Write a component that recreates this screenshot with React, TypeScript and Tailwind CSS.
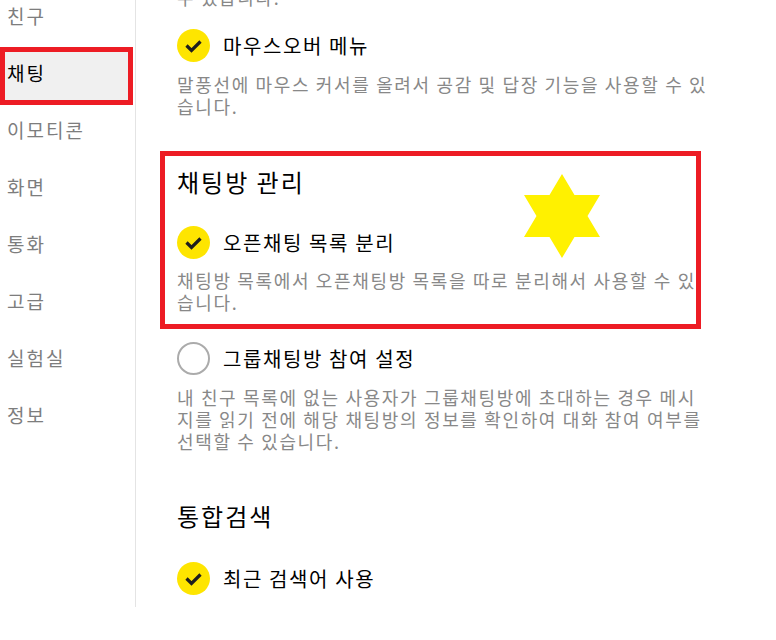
const menu = ["친구", "채팅", "이모티콘", "화면", "통화", "고급", "실험실", "정보"];

function CheckOn() {
  return (
    <svg width="33" height="33" viewBox="0 0 33 33" className="shrink-0">
      <circle cx="16.5" cy="16.5" r="16.5" fill="#fee500" />
      <path d="M9.5 16.5 L14.5 21.5 L23.5 12.5" fill="none" stroke="#1e1e1e" strokeWidth="3.2" />
    </svg>
  );
}

function CheckOff() {
  return <div className="w-[33px] h-[33px] shrink-0 rounded-full border-2 border-[#ababab] bg-white" />;
}

function Option({ on, label, className = "" }: { on: boolean; label: string; className?: string }) {
  return (
    <div className={`flex items-center gap-[13px] h-[33px] ${className}`}>
      {on ? <CheckOn /> : <CheckOff />}
      <span className="text-[20px] tracking-[1.6px] text-black">{label}</span>
    </div>
  );
}

function Star() {
  return (
    <svg width="76" height="84" viewBox="0 0 76 84">
      <polygon
        points="38,0 50.5,21 76,21 63.5,42 76,63 50.5,63 38,84 25.5,63 0,63 12.5,42 0,21 25.5,21"
        fill="#fff100"
      />
    </svg>
  );
}

export default function App() {
  return (
    <div className="h-[640px] bg-white font-['Noto_Sans_CJK_KR',sans-serif]">
      <div className="flex h-[607px] overflow-hidden">
        <aside className="w-[136px] shrink-0 border-r border-[#e4e4e4]">
          <ul className="-mt-[12px]">
            {menu.map((m) => (
              <li key={m} className="relative h-[57px] flex items-center pl-[7px]">
                {m === "채팅" && (
                  <div className="absolute left-0 top-[2px] w-[133px] h-[58px] border-[5px] border-[#ed1c24] bg-[#f0f0f0]" />
                )}
                <span className={`relative text-[19px] tracking-[2px] ${m === "채팅" ? "text-black" : "text-[#7d7d7d]"}`}>{m}</span>
              </li>
            ))}
          </ul>
        </aside>

        <main className="flex-1 pl-[41px] text-[18px] tracking-[1.65px]">
          <div className="-mt-[14px]">
            <p className="leading-[22px] text-[#888]">수 있습니다.</p>

            <Option on label="마우스오버 메뉴" className="mt-[21px]" />
            <p className="mt-[11px] leading-[22px] text-[#888]">
              말풍선에 마우스 커서를 올려서 공감 및 답장 기능을 사용할 수 있<br />
              습니다.
            </p>

            <section className="relative mt-[49px]">
              <div className="absolute -left-[17px] -top-[15px] w-[541px] h-[178px] border-[5px] border-[#ed1c24]" />
              <div className="absolute left-[347px] top-[8px]">
                <Star />
              </div>
              <h2 className="relative text-[24px] leading-[32px] text-black tracking-[2px]">채팅방 관리</h2>
              <Option on label="오픈채팅 목록 분리" className="relative mt-[28px]" />
              <p className="relative mt-[10px] leading-[22px] text-[#888]">
                채팅방 목록에서 오픈채팅방 목록을 따로 분리해서 사용할 수 있<br />
                습니다.
              </p>
            </section>

            <Option on={false} label="그룹채팅방 참여 설정" className="mt-[29px]" />
            <p className="mt-[11px] leading-[22px] text-[#888]">
              내 친구 목록에 없는 사용자가 그룹채팅방에 초대하는 경우 메시<br />
              지를 읽기 전에 해당 채팅방의 정보를 확인하여 대화 참여 여부를<br />
              선택할 수 있습니다.
            </p>

            <h2 className="mt-[48px] text-[24px] leading-[32px] text-black tracking-[2px]">통합검색</h2>
            <Option on label="최근 검색어 사용" className="mt-[30px]" />
          </div>
        </main>
      </div>
    </div>
  );
}
